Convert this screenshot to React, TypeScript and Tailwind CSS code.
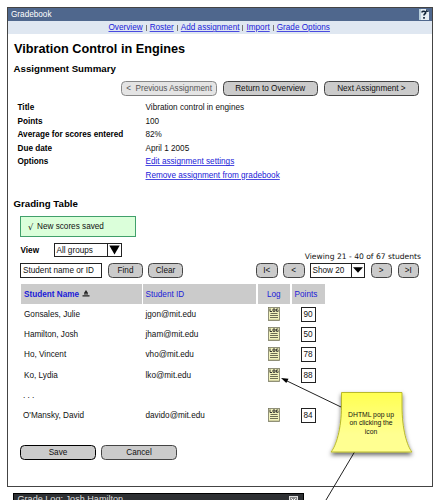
import type { ReactNode } from 'react';

function Button({ children, className = '' }: { children: ReactNode; className?: string }) {
  return (
    <button
      className={`flex h-[15px] shrink-0 items-center justify-center rounded-[4.5px] border border-[#444] bg-[#cbcbcb] pt-[1.5px] text-[8.2px] leading-none whitespace-pre text-[#111] ${className}`}
    >
      {children}
    </button>
  );
}

function Link({ children }: { children: ReactNode }) {
  return (
    <a href="#" className="text-[#1a1ad8] underline decoration-[#4a4ae0] decoration-1 underline-offset-1">
      {children}
    </a>
  );
}

function Select({ label, className, arrowClass, small }: { label: string; className: string; arrowClass: string; small?: boolean }) {
  return (
    <div className={`flex shrink-0 border border-[#222] bg-white ${className}`}>
      <span className="flex flex-1 items-center pt-[1.5px] pl-[1.5px] whitespace-nowrap">{label}</span>
      <span className={`flex items-center justify-center border-l border-[#222] ${arrowClass}`}>
        {small ? (
          <svg width="10" height="6" viewBox="0 0 10 6"><path d="M0 0.3H10L5 5.8Z" fill="#000" /></svg>
        ) : (
          <svg width="11" height="10" viewBox="0 0 11 10"><path d="M0.3 0.5H10.7L5.5 9.5Z" fill="#000" /></svg>
        )}
      </span>
    </div>
  );
}

function LogIcon() {
  return (
    <svg width="12" height="14" viewBox="0 0 12 14" className="mt-[-1px]">
      <rect x="0.5" y="0.5" width="11" height="13" fill="#f3f3bd" stroke="#77775f" strokeWidth="0.8" />
      <path d="M2 1.5V4.5H4M5 2H7V4.3H5ZM10.3 2H8.4V4.3H10.2V3.3" fill="none" stroke="#222" strokeWidth="0.9" />
      <path d="M2.5 6.5H9.5M2 8.5H10M2 10.5H10" stroke="#5e5e49" strokeWidth="0.9" />
      <path d="M1 12.5H11" stroke="#bfbf92" strokeWidth="0.7" />
    </svg>
  );
}

const summary: [string, ReactNode][] = [
  ['Title', 'Vibration control in engines'],
  ['Points', '100'],
  ['Average for scores entered', '82%'],
  ['Due date', 'April 1 2005'],
  ['Options', <Link>Edit assignment settings</Link>],
  ['', <Link>Remove assignment from gradebook</Link>],
];

const students = [
  ['Gonsales, Julie', 'jgon@mit.edu', '90'],
  ['Hamilton, Josh', 'jham@mit.edu', '50'],
  ['Ho, Vincent', 'vho@mit.edu', '78'],
  ['Ko, Lydia', 'lko@mit.edu', '88'],
  ['. . .', '', ''],
  ["O'Mansky, David", 'davido@mit.edu', '84'],
];

const nav = ['Overview', 'Roster', 'Add assignment', 'Import', 'Grade Options'];

export default function App() {
  return (
    <div className="relative h-[500px] w-[441px] overflow-hidden bg-white pt-[7px] pl-[7px] font-['Liberation_Sans',Arial,sans-serif] text-[8.2px] leading-none text-[#111]">
      <main className="flex h-[480px] w-[426px] flex-col border border-[#444]">
        <header className="flex h-[13px] shrink-0 items-center justify-between bg-[#4f678d] pr-[3px] pl-[3px] text-white">
          <span className="pt-px">Gradebook</span>
          <svg width="10" height="11" viewBox="0 0 10 11">
            <path d="M0 0H7L10 3V11H0Z" fill="#e4edf3" />
            <path d="M7 0V3H10Z" fill="#24384c" />
            <path d="M1 0V11" stroke="#8fb2c6" strokeWidth="1" />
            <path d="M3 3.6C3 1.7 6.8 1.8 6.6 3.8C6.5 5 5 5 5 6.6M5 8V9.7" fill="none" stroke="#102439" strokeWidth="1.7" />
          </svg>
        </header>
        <nav className="flex h-[13px] shrink-0 items-center bg-[#dfe7f1] pt-[1.5px] pl-[100.5px]">
          {nav.map((n, i) => (
            <span key={n} className="flex items-center">
              {i > 0 && <span className="mx-[3px] h-[6px] w-px bg-[#777]" />}
              <Link>{n}</Link>
            </span>
          ))}
        </nav>
        <h1 className="flex h-[30px] shrink-0 items-center pl-[6px] text-[12.7px] font-bold text-black">Vibration Control in Engines</h1>
        <h2 className="flex h-[8px] shrink-0 items-center pl-[5.5px] pt-px text-[9.7px] font-bold text-black">Assignment Summary</h2>
        <div className="mt-[9px] flex h-[15px] shrink-0 justify-end gap-[6px] pr-[13px]">
          <Button className="w-[95.2px] border-[#888] bg-[#e4e4e4] text-[#555]">{'<  Previous Assignment'}</Button>
          <Button className="w-[95.2px]">Return to Overview</Button>
          <Button className="w-[95.2px]">Next Assignment &gt;</Button>
        </div>
        <dl className="mt-[5.7px] shrink-0 pl-[9.5px]">
          {summary.map(([k, v], i) => (
            <div key={i} className="flex h-[13.5px] items-center">
              <dt className="w-[128px] font-bold text-black">{k}</dt>
              <dd>{v}</dd>
            </div>
          ))}
        </dl>
        <h2 className="mt-[15.3px] flex h-[10px] shrink-0 items-center pt-px pl-[5.5px] text-[9.7px] font-bold text-black">Grading Table</h2>
        <div className="mt-[8px] ml-[12px] flex h-[21px] w-[116px] shrink-0 items-center border border-[#41a06b] bg-[#dbffda] pt-[1.5px] pl-[7px]">
          <span className="w-[9px] font-['DejaVu_Sans',sans-serif]">√</span>
          <span>New scores saved</span>
        </div>
        <div className="mt-[6px] flex h-[14px] shrink-0 items-center pl-[12.5px]">
          <span className="w-[33.5px] pt-[1.5px] font-bold text-black">View</span>
          <Select label="All groups" className="h-[14px] w-[68px]" arrowClass="w-[14px]" />
          <span className="mt-[14px] ml-auto pr-[11px] font-['DejaVu_Sans',sans-serif] text-[7.6px]">Viewing 21 - 40 of 67 students</span>
        </div>
        <div className="mt-[6px] flex h-[15px] shrink-0 items-center pr-[13px] pl-[12px]">
          <div className="flex h-[15px] w-[82px] items-center border border-[#222] bg-white pt-[1.5px] pl-[2px] whitespace-nowrap">Student name or ID</div>
          <Button className="ml-[6px] w-[35px]">Find</Button>
          <Button className="ml-[5px] w-[35px]">Clear</Button>
          <div className="ml-auto flex gap-[5.5px]">
            <Button className="w-[21.5px]">I&lt;</Button>
            <Button className="w-[21.5px]">&lt;</Button>
            <Select label="Show 20" className="h-[15px] w-[55px]" arrowClass="w-[13px]" small />
            <Button className="w-[21.5px]">&gt;</Button>
            <Button className="w-[21.5px]">&gt;I</Button>
          </div>
        </div>
        <div className="mt-[6px] ml-[13px] shrink-0">
          <div className="grid h-[20px] grid-cols-[120.5px_113px_32.5px_33px] gap-[1.5px] text-[#1a1ad8]">
            <div className="flex items-center gap-[3px] bg-[#cbcbcb] pt-[1.5px] pl-[3px] font-bold">
              Student Name
              <svg width="8" height="7" viewBox="0 0 8 7" className="mb-[3px]"><path d="M4 0L6 3H2ZM2 3.3H6V4.5H2ZM0.5 5.2H7.5V6.5H0.5Z" fill="#222" /></svg>
            </div>
            <div className="flex items-center bg-[#cbcbcb] pt-[1.5px] pl-[2.5px]">Student ID</div>
            <div className="flex items-center justify-center bg-[#cbcbcb] pt-[1.5px]">Log</div>
            <div className="flex items-center justify-center bg-[#cbcbcb] pt-[1.5px] pr-[4px]">Points</div>
          </div>
          {students.map(([name, id, points], i) => (
            <div key={name} className="grid h-[20.3px] grid-cols-[120.5px_113px_32.5px_33px] items-center gap-[1.5px]">
              <div className={i > 3 ? 'pt-[1.5px] pl-[2px]' : 'pt-[1.5px] pl-[3px]'}>{name}</div>
              <div className="pt-[1.5px] pl-[2.5px]">{id}</div>
              <div className="flex justify-center">{points && <LogIcon />}</div>
              <div className="flex justify-center">
                {points && <span className="flex h-[15px] w-[15px] items-center justify-center border border-[#222] bg-white pt-[1.5px]">{points}</span>}
              </div>
            </div>
          ))}
        </div>
        <div className="mt-[19px] flex shrink-0 gap-[5px] pl-[12px]">
          <Button className="w-[76px] border-[1.5px] border-black">Save</Button>
          <Button className="w-[76px]">Cancel</Button>
        </div>
      </main>
      <section className="mt-[6px] ml-[6px] flex h-[14px] w-[291px] items-center justify-between border border-black bg-[#2e3033] pr-[5px] pl-[3.5px] text-[9.1px] text-[#ddd]">
        <span>Grade Log: Josh Hamilton</span>
        <svg width="9" height="9" viewBox="0 0 9 9"><rect x="0.5" y="0.5" width="8" height="8" fill="#888" stroke="#ddd" /><path d="M2.3 2.3L6.7 6.7M6.7 2.3L2.3 6.7" stroke="#fff" /></svg>
      </section>

      {/* Annotation: sticky note with its pointer lines */}
      <svg className="absolute top-0 left-0" width="441" height="500" viewBox="0 0 441 500">
        <defs>
          <linearGradient id="paper" x1="0" y1="0" x2="0" y2="1">
            <stop offset="0" stopColor="#ffff50" />
            <stop offset="0.7" stopColor="#ffff91" />
            <stop offset="1" stopColor="#ffff91" />
          </linearGradient>
          <filter id="shade" x="-20%" y="-20%" width="140%" height="150%">
            <feDropShadow dx="0" dy="2.5" stdDeviation="2" floodColor="#000" floodOpacity="0.6" />
          </filter>
        </defs>
        <path d="M341 407L285 380M354.5 452L326 500" stroke="#222" strokeWidth="1" />
        <path d="M281 378L288.5 378.8L286.3 383Z" fill="#000" />
        <path
          d="M341.5 392.5H402V406C402 429 407 446 412 452H331C336 446 341.5 429 341.5 406Z"
          fill="url(#paper)"
          stroke="#b9b92a"
          strokeWidth="1"
          filter="url(#shade)"
        />
      </svg>
      <div className="absolute top-[411px] left-[341px] w-[60px] text-center text-[6.8px] leading-[8.3px] whitespace-nowrap">
        DHTML pop up
        <br />
        on clicking the
        <br />
        icon
      </div>
    </div>
  );
}
